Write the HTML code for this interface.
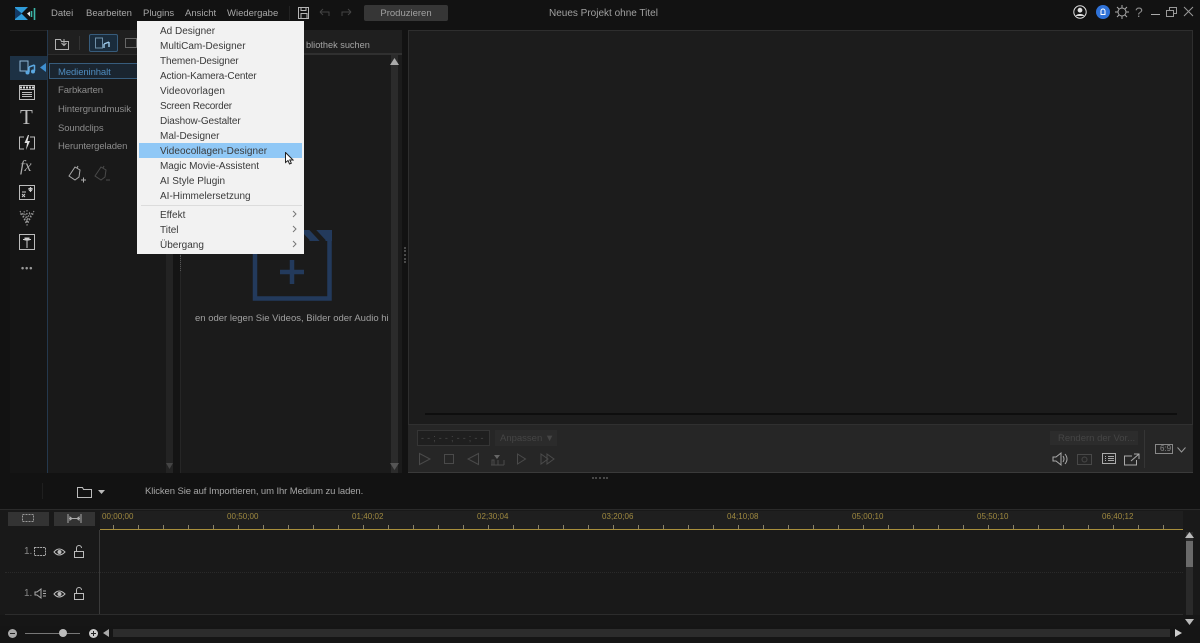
<!DOCTYPE html>
<html><head><meta charset="utf-8"><style>
html,body{margin:0;padding:0;background:#121212;}
#r{position:relative;width:1200px;height:643px;overflow:hidden;background:#121212;font-family:"Liberation Sans",sans-serif;font-size:10px;color:#aaa;filter:blur(.3px);}
.a,.t,svg{position:absolute;}
.t{white-space:nowrap;line-height:12px;}
.m{color:#a8a8a8;font-size:9.5px;top:8px;}
.i{color:#3a3a3a;font-size:10px;left:160px;}
.l{left:58px;color:#8c8c8c;font-size:9.5px;letter-spacing:-.1px;}
.tc{color:#a08a40;font-size:8px;top:511px;letter-spacing:.05px;}
svg{fill:none;stroke:#b5b5b5;stroke-width:1;}
</style></head><body><div id="r">

<!-- logo -->
<svg style="left:15px;top:7px" width="23" height="14" viewBox="0 0 23 14"><path d="M0 0H13L6.500 6.500 13 13H0z" fill="#2f9bd8" stroke="none"/><path d="M0 1L7 6.500 0 12z" fill="#123a66" stroke="none"/><path d="M16.500 4v6M19.500 1v12" stroke="#3cb6a8" stroke-width="1.600"/><path d="M12 6.500l3-2v5z" fill="#e8e8e8" stroke="none"/></svg>
<div class="t m" style="left:51px">Datei</div>
<div class="t m" style="left:86px">Bearbeiten</div>
<div class="t m" style="left:143px">Plugins</div>
<div class="t m" style="left:185px">Ansicht</div>
<div class="t m" style="left:227px">Wiedergabe</div>
<div class="a" style="left:289px;top:6px;width:1px;height:14px;background:#222"></div>
<svg style="left:298px;top:7px" width="12" height="12"><path d="M.5.500h10v11H.5zM3 .500v3h5v-3M3 11.500v-5h6v5"/></svg>
<svg style="left:319px;top:8px" width="12" height="10"><path d="M1 4h9v4M1 4l3-3M1 4l3 3" stroke="#444"/></svg>
<svg style="left:340px;top:8px" width="12" height="10"><path d="M11 4H2v4M11 4L8 1M11 4L8 7" stroke="#444"/></svg>
<div class="a" style="left:364px;top:5px;width:84px;height:16px;background:#363636;border-radius:2px"></div>
<div class="t" style="left:364px;top:8px;width:84px;text-align:center;color:#a0a0a0;font-size:9.500px">Produzieren</div>
<div class="t" style="left:549px;top:8px;color:#a0a0a0;">Neues Projekt ohne Titel</div>

<!-- top right -->
<svg style="left:1073px;top:5px" width="14" height="14"><circle cx="7" cy="7" r="6.200" stroke="#e0e0e0"/><circle cx="7" cy="5.200" r="2.400" fill="#e0e0e0" stroke="none"/><path d="M2.800 11c.6-2.600 7.800-2.600 8.400 0z" fill="#e0e0e0" stroke="none"/></svg>
<svg style="left:1096px;top:5px" width="14" height="14"><circle cx="7" cy="7" r="7" fill="#2f72d8" stroke="none"/><path d="M4.500 9.500h5M5 9.500V6a2 2 0 0 1 4 0v3.500" stroke="#fff"/></svg>
<svg style="left:1115px;top:5px" width="14" height="14"><circle cx="7" cy="7" r="4" stroke="#aaa"/><path d="M7 0v2.500M7 11.500V14M0 7h2.500M11.500 7H14M2 2l2 2M10 10l2 2M12 2l-2 2M4 10l-2 2" stroke="#aaa"/></svg>
<div class="t" style="left:1135px;top:5px;font-size:14px;line-height:15px;color:#8a8a8a">?</div>
<div class="a" style="left:1151px;top:14px;width:9px;height:1px;background:#aaa"></div>
<svg style="left:1166px;top:6px" width="12" height="12"><path d="M.5 4.500h7v6h-7zM3.500 4.500v-3h7v6h-3" stroke="#999"/></svg>
<svg style="left:1183px;top:6px" width="12" height="12"><path d="M1 1l9 9M10 1l-9 9" stroke="#999"/></svg>

<!-- Left tool rail -->
<div class="a" style="left:10px;top:30px;width:37px;height:1px;background:#242424"></div>
<div class="a" style="left:10px;top:56px;width:37px;height:24px;background:#1d3144"></div>
<div class="a" style="left:47px;top:30px;width:1px;height:443px;background:#24384d"></div>
<div class="a" style="left:10px;top:80px;width:37px;height:393px;background:#151515"></div>
<svg style="left:19px;top:59px" width="17" height="16"><path d="M1 2h8v10H1z" stroke="#8fb6d8"/><path d="M10 8v5M15.500 6v6M10 8l5.500-2" stroke="#5ba7e0" stroke-width="1.500"/><circle cx="8.500" cy="13.500" r="2" fill="#5ba7e0" stroke="none"/><circle cx="14" cy="12.500" r="2" fill="#5ba7e0" stroke="none"/></svg>
<svg style="left:40px;top:63px" width="7" height="9"><path d="M6 0v9L0 4.500z" fill="#3f8fd0" stroke="none"/></svg>
<svg style="left:19px;top:85px" width="16" height="15"><path d="M.5.500h15v14H.5zM1 4.500h14M3 7.500h10M3 9.500h10M3 11.500h10" stroke="#bbb"/><path d="M1 2.500h14" stroke="#ddd" stroke-width="2" stroke-dasharray="2 1"/></svg>
<div class="t" style="left:20px;top:107px;font:21px/21px 'Liberation Serif',serif;color:#bbb">T</div>
<svg style="left:19px;top:135px" width="16" height="16"><path d="M5 2H.5v12H5M11 2h4.500v12H11" stroke="#bbb"/><path d="M9 0L5.500 8H8L7 15l4-9H8.500L10 0z" fill="#ddd" stroke="none"/></svg>
<div class="t" style="left:20px;top:158px;font:italic 16px/18px 'Liberation Serif',serif;color:#aaa">fx</div>
<svg style="left:19px;top:185px" width="16" height="16"><path d="M.5.500h15v14H.5z" stroke="#bbb"/><path d="M3 9l3 3M6 9l-3 3M9 4h5M11.500 2v5M10 3l3 3M13 3l-3 3M3 7h4" stroke="#ccc"/></svg>
<svg style="left:19px;top:209px" width="16" height="17" stroke-dasharray="1.500 1.500"><path d="M1 2l7 14 7-14M3 4l5 10 5-10M5 2l3 10 3-10M8 1v12M1 5h14" stroke="#999"/></svg>
<svg style="left:19px;top:234px" width="16" height="16"><path d="M.5.500h15v15H.5z" stroke="#bbb"/><path d="M8 6v8M4 5.500h8" stroke="#ccc"/><path d="M5.500 3.500h5v3h-5z" fill="#ccc" stroke="none"/></svg>
<div class="t" style="left:21px;top:262px;font-weight:bold;font-size:9px;letter-spacing:1px;color:#9a9a9a;">•••</div>

<!-- Library panel -->
<div class="a" style="left:48px;top:30px;width:354px;height:443px;background:#1b1b1b"></div>
<div class="a" style="left:48px;top:30px;width:354px;height:25px;background:#1f1f1f;border-bottom:1px solid #2d2d2d;box-sizing:border-box"></div>
<svg style="left:55px;top:37px" width="15" height="13"><path d="M.5 2.500h5l1 2h7v8H.5zM9 2v6M6.500 6L9 8.500 11.500 6" stroke="#b0b0b0"/></svg>
<div class="a" style="left:79px;top:36px;width:1px;height:14px;background:#333"></div>
<div class="a" style="left:89px;top:34px;width:29px;height:18px;background:#1a2c3c;border:1px solid #375c7c;border-radius:2px;box-sizing:border-box"></div>
<svg style="left:95px;top:37px" width="16" height="13"><path d="M.5 1h7v10H.5z" stroke="#6f8fa8"/><path d="M9 7v4M14 5v5M9 7l5-2" stroke="#9cc8e8" stroke-width="1.400"/></svg>
<svg style="left:125px;top:38px" width="12" height="11"><path d="M.5.500h11v9H.5z" stroke="#666"/></svg>
<div class="a" style="left:48px;top:55px;width:118px;height:418px;background:#191919"></div>
<div class="a" style="left:49px;top:63px;width:89px;height:16px;border:1px solid #375c7c;background:#1a2530;box-sizing:border-box"></div>
<div class="t l" style="top:67px;color:#4f8cbf">Medieninhalt</div>
<div class="t l" style="top:85px">Farbkarten</div>
<div class="t l" style="top:104px">Hintergrundmusik</div>
<div class="t l" style="top:123px">Soundclips</div>
<div class="t l" style="top:141px">Heruntergeladen</div>
<svg style="left:68px;top:165px" width="18" height="19"><path d="M1 11L7 2l5 3-1 7-4 3zM9 3l1-2" stroke="#aaa"/><path d="M13 15h5M15.500 12.500v5" stroke="#aaa"/></svg>
<svg style="left:94px;top:165px" width="18" height="19"><path d="M1 11L7 2l5 3-1 7-4 3zM9 3l1-2M12 15h4" stroke="#4a4a4a"/></svg>

<div class="a" style="left:166px;top:55px;width:7px;height:418px;background:#232323"></div>
<div class="a" style="left:173px;top:55px;width:7px;height:418px;background:#141414"></div>
<div class="a" style="left:180px;top:55px;width:1px;height:418px;background:#262626"></div>
<div class="a" style="left:180px;top:255px;height:16px;border-left:1px dotted #555"></div>

<div class="t" style="left:306px;top:39px;color:#a5a5a5;font-size:9.200px">bliothek suchen</div>
<div class="a" style="left:181px;top:53px;width:221px;height:2px;background:#303030"></div>
<div class="a" style="left:391px;top:55px;width:7px;height:418px;background:#2b2b2b"></div>
<svg style="left:390px;top:58px" width="9" height="8"><path d="M4.500 0L9 7H0z" fill="#aaa" stroke="none"/></svg>
<svg style="left:390px;top:463px" width="9" height="8"><path d="M4.500 7L9 0H0z" fill="#555" stroke="none"/></svg>
<svg style="left:166px;top:463px" width="7" height="7"><path d="M3.500 6L7 0H0z" fill="#444" stroke="none"/></svg>

<svg style="left:252px;top:229px" width="80" height="72"><path d="M3 10V69.500H77.500V10" stroke="#233a5c" stroke-width="4.500"/><path d="M3 1H80V12H3z" fill="#233a5c" stroke="none"/><path d="M58 -2L72 13M42 -2L56 13" stroke="#1b1b1b" stroke-width="5"/><path d="M28 43H52M40 31V55" stroke="#233a5c" stroke-width="4.500"/></svg>
<div class="a" style="left:181px;top:312px;width:208px;height:14px;overflow:hidden"><div class="t" style="left:14px;top:1px;color:#a0a0a0;font-size:9.500px;">en oder legen Sie Videos, Bilder oder Audio hier ab</div></div>

<div class="a" style="left:404px;top:247px;height:16px;border-left:2px dotted #4a4a4a"></div>

<!-- Preview panel -->
<div class="a" style="left:408px;top:30px;width:785px;height:443px;background:#1c1c1c;border:1px solid #2e2e2e;border-bottom:0;box-sizing:border-box"></div>
<div class="a" style="left:425px;top:413px;width:752px;height:2px;background:#0e0e0e"></div>
<div class="a" style="left:408px;top:424px;width:785px;height:49px;background:#262626;border-top:1px solid #303030;border-bottom:1px solid #3a3a3a;box-sizing:border-box"></div>
<div class="a" style="left:417px;top:430px;width:73px;height:16px;background:#1f1f1f;border:1px solid #353535;box-sizing:border-box"></div>
<div class="t" style="left:421px;top:432px;color:#4a4a4a;letter-spacing:.3px;font-size:9px">- - ; - - ; - - ; - -</div>
<div class="a" style="left:495px;top:430px;width:62px;height:16px;background:#2b2b2b"></div>
<div class="t" style="left:500px;top:433px;color:#454545;font-size:9.500px">Anpassen ▼</div>
<svg style="left:417px;top:451px;stroke:#4a4a4a" width="140" height="16"><path d="M2.500 2.500L13 8 2.500 13.500zM27.500 3.500h9v9h-9zM61.500 2.500v11L51 8z"/><path d="M75 14V9h2v5M81 14V9M87 14V9M74 14h13" stroke="#4a4a4a"/><path d="M77 4h6l-3 4z" fill="#666" stroke="none"/><path d="M100.500 3l8 5-8 5zM124 3l7 5-7 5zM130 3l7 5-7 5z"/></svg>
<div class="a" style="left:1050px;top:431px;width:88px;height:14px;background:#2c2c2c"></div>
<div class="t" style="left:1058px;top:433px;color:#454545;font-size:9.500px">Rendern der Vor...</div>
<div class="a" style="left:1144px;top:430px;width:1px;height:38px;background:#353535"></div>
<svg style="left:1052px;top:451px" width="16" height="16"><path d="M1 6v4h3l5 4V2L4 6zM11 5q2 3 0 6M13 3q4 5 0 10" stroke="#aaa"/></svg>
<svg style="left:1077px;top:452px" width="15" height="13"><path d="M.5 2.500h14v10H.5z" stroke="#484848"/><circle cx="7.500" cy="7.500" r="2.500" stroke="#484848"/></svg>
<svg style="left:1102px;top:453px" width="15" height="12"><path d="M.5.500h13v10H.5zM3 3.500h1M6 3.500h6M3 5.500h1M6 5.500h6M3 7.500h1M6 7.500h6" stroke="#aaa"/></svg>
<svg style="left:1124px;top:453px" width="16" height="13"><path d="M8 3H.5v9h12V7M7 8l8-7M10 1h5v5" stroke="#aaa"/></svg>
<div class="a" style="left:1155px;top:444px;width:18px;height:10px;border:1px solid #888;box-sizing:border-box"></div>
<div class="t" style="left:1160px;top:444px;font-size:8px;line-height:10px;color:#888">6:9</div>
<svg style="left:1177px;top:447px" width="9" height="6"><path d="M.5.500L4.500 5l4-4.500" stroke="#999"/></svg>

<div class="a" style="left:592px;top:477px;width:16px;border-top:2px dotted #484848"></div>

<!-- Status bar -->
<div class="a" style="left:42px;top:483px;width:1px;height:16px;background:#1f1f1f"></div>
<svg style="left:77px;top:486px" width="16" height="12"><path d="M.5 1.500h5l1 2h8v8H.5z" stroke="#bbb"/></svg>
<svg style="left:98px;top:490px" width="7" height="4"><path d="M0 0h7L3.500 4z" fill="#bbb" stroke="none"/></svg>
<div class="t" style="left:145px;top:486px;color:#a5a5a5;font-size:9.500px;letter-spacing:-.1px">Klicken Sie auf Importieren, um Ihr Medium zu laden.</div>

<!-- Timeline -->
<div class="a" style="left:0;top:510px;width:1200px;height:133px;background:#191919"></div>
<div class="a" style="left:0;top:509px;width:1200px;height:1px;background:#2a2a2a"></div>
<div class="a" style="left:8px;top:512px;width:41px;height:14px;background:#333"></div>
<div class="a" style="left:54px;top:512px;width:41px;height:14px;background:#333"></div>
<svg style="left:22px;top:514px" width="14" height="9"><path d="M.5.500h11v7H.5z" stroke="#999" stroke-dasharray="2 1"/></svg>
<svg style="left:67px;top:514px" width="15" height="9"><path d="M1 0v9M14 0v9M2 4.500h11M5 4.500L3 3v3zM10 4.500L12 3v3z" stroke="#aaa"/></svg>
<div class="a" style="left:100px;top:511px;width:1083px;height:19px;background:#1f1f1f"></div>
<div id="ticks">
<div class="t tc" style="left:102px">00;00;00</div>
<div class="t tc" style="left:227px">00;50;00</div>
<div class="t tc" style="left:352px">01;40;02</div>
<div class="t tc" style="left:477px">02;30;04</div>
<div class="t tc" style="left:602px">03;20;06</div>
<div class="t tc" style="left:727px">04;10;08</div>
<div class="t tc" style="left:852px">05;00;10</div>
<div class="t tc" style="left:977px">05;50;10</div>
<div class="t tc" style="left:1102px">06;40;12</div>
</div>
<svg style="left:100px;top:524px;stroke:#8a8268" width="1084" height="6"><path d="M13.500 1v5M38.500 1v5M63.500 1v5M88.500 1v5M113.500 1v5M138.500 1v5M163.500 1v5M188.500 1v5M213.500 1v5M238.500 1v5M263.500 1v5M288.500 1v5M313.500 1v5M338.500 1v5M363.500 1v5M388.500 1v5M413.500 1v5M438.500 1v5M463.500 1v5M488.500 1v5M513.500 1v5M538.500 1v5M563.500 1v5M588.500 1v5M613.500 1v5M638.500 1v5M663.500 1v5M688.500 1v5M713.500 1v5M738.500 1v5M763.500 1v5M788.500 1v5M813.500 1v5M838.500 1v5M863.500 1v5M888.500 1v5M913.500 1v5M938.500 1v5M963.500 1v5M988.500 1v5M1013.500 1v5M1038.500 1v5M1063.500 1v5" /></svg>
<div class="a" style="left:100px;top:529px;width:1083px;height:1px;background:#a88f3c"></div>

<div class="a" style="left:99px;top:530px;width:1px;height:99px;background:#3a3a3a"></div>
<div class="a" style="left:5px;top:572px;width:1178px;height:0;border-top:1px dotted #2a2a2a"></div>
<div class="a" style="left:5px;top:614px;width:1178px;height:1px;background:#2c2c2c"></div>
<div class="a" style="left:0;top:615px;width:1200px;height:11px;background:#161616"></div>
<div class="t" style="left:24px;top:546px;color:#888">1.</div>
<svg style="left:34px;top:546px" width="13" height="11"><path d="M.5 1.500h11v8H.5z" stroke="#aaa" stroke-dasharray="2 .8"/></svg>
<svg style="left:53px;top:547px" width="13" height="10"><path d="M1 5q5-6 11 0q-6 6-11 0z" stroke="#bbb"/><circle cx="6.500" cy="5" r="2" fill="#bbb" stroke="none"/></svg>
<svg style="left:73px;top:545px" width="12" height="13"><path d="M1.500 6.500h9v6h-9zM3.500 6.500V3a2.500 2.500 0 0 1 5 0" stroke="#bbb"/></svg>
<div class="t" style="left:24px;top:588px;color:#888">1.</div>
<svg style="left:34px;top:588px" width="13" height="11"><path d="M1 4v3h2l4 3V1L3 4zM9 3h3M9 5.500h3M9 8h3" stroke="#aaa"/></svg>
<svg style="left:53px;top:589px" width="13" height="10"><path d="M1 5q5-6 11 0q-6 6-11 0z" stroke="#bbb"/><circle cx="6.500" cy="5" r="2" fill="#bbb" stroke="none"/></svg>
<svg style="left:73px;top:587px" width="12" height="13"><path d="M1.500 6.500h9v6h-9zM3.500 6.500V3a2.500 2.500 0 0 1 5 0" stroke="#bbb"/></svg>

<!-- vertical scroll -->
<div class="a" style="left:1186px;top:532px;width:7px;height:83px;background:#2a2a2a"></div>
<svg style="left:1185px;top:532px" width="9" height="7"><path d="M4.500 0L9 6H0z" fill="#bbb" stroke="none"/></svg>
<div class="a" style="left:1186px;top:541px;width:7px;height:26px;background:#6a6a6a"></div>
<svg style="left:1185px;top:619px" width="9" height="6"><path d="M4.500 6L9 0H0z" fill="#bbb" stroke="none"/></svg>

<!-- bottom -->
<div class="a" style="left:0;top:626px;width:1200px;height:17px;background:#151515"></div>
<div class="a" style="left:8px;top:629px;width:9px;height:9px;border-radius:50%;background:#aaa"></div>
<div class="a" style="left:10px;top:633px;width:5px;height:1px;background:#222"></div>
<div class="a" style="left:25px;top:633px;width:55px;height:1px;background:#777"></div>
<div class="a" style="left:59px;top:629px;width:8px;height:8px;border-radius:50%;background:#bbb"></div>
<div class="a" style="left:89px;top:629px;width:9px;height:9px;border-radius:50%;background:#ccc"></div>
<div class="a" style="left:91px;top:633px;width:5px;height:1px;background:#222"></div>
<div class="a" style="left:93px;top:631px;width:1px;height:5px;background:#222"></div>
<svg style="left:103px;top:629px" width="6" height="8"><path d="M0 4L6 0v8z" fill="#aaa" stroke="none"/></svg>
<div class="a" style="left:113px;top:629px;width:1057px;height:8px;background:#2c2c2c"></div>
<svg style="left:1175px;top:629px" width="7" height="8"><path d="M7 4L0 0v8z" fill="#ccc" stroke="none"/></svg>

<!-- Menu -->
<div class="a" style="left:137px;top:21px;width:167px;height:233px;background:#f2f2f2"></div>
<div class="a" style="left:139px;top:143px;width:163px;height:15px;background:#90c8f6"></div>
<div class="a" style="left:141px;top:205px;width:161px;height:1px;background:#dcdcdc"></div>
<div class="t i" style="top:25px;margin-top:1px">Ad Designer</div>
<div class="t i" style="top:41px">MultiCam-Designer</div>
<div class="t i" style="top:56px;letter-spacing:-.1px">Themen-Designer</div>
<div class="t i" style="top:71px;letter-spacing:-.15px">Action-Kamera-Center</div>
<div class="t i" style="top:86px;letter-spacing:.1px">Videovorlagen</div>
<div class="t i" style="top:101px;letter-spacing:-.25px">Screen Recorder</div>
<div class="t i" style="top:116px;letter-spacing:-.1px">Diashow-Gestalter</div>
<div class="t i" style="top:131px">Mal-Designer</div>
<div class="t i" style="top:146px;letter-spacing:.05px">Videocollagen-Designer</div>
<div class="t i" style="top:161px;letter-spacing:-.05px">Magic Movie-Assistent</div>
<div class="t i" style="top:176px">AI Style Plugin</div>
<div class="t i" style="top:191px">AI-Himmelersetzung</div>
<div class="t i" style="top:210px">Effekt</div>
<div class="t i" style="top:225px">Titel</div>
<div class="t i" style="top:240px">Übergang</div>
<svg style="left:292px;top:210px" width="5" height="8"><path d="M1 1l3 3-3 3" stroke="#777"/></svg>
<svg style="left:292px;top:225px" width="5" height="8"><path d="M1 1l3 3-3 3" stroke="#777"/></svg>
<svg style="left:292px;top:240px" width="5" height="8"><path d="M1 1l3 3-3 3" stroke="#777"/></svg>
<svg style="left:285px;top:152px" width="9" height="13"><path d="M.5.500v10l2.500-2 1.500 3.500 1.800-.8L4.800 8H8z" fill="#fff" stroke="#222"/></svg>
</div></body></html>
